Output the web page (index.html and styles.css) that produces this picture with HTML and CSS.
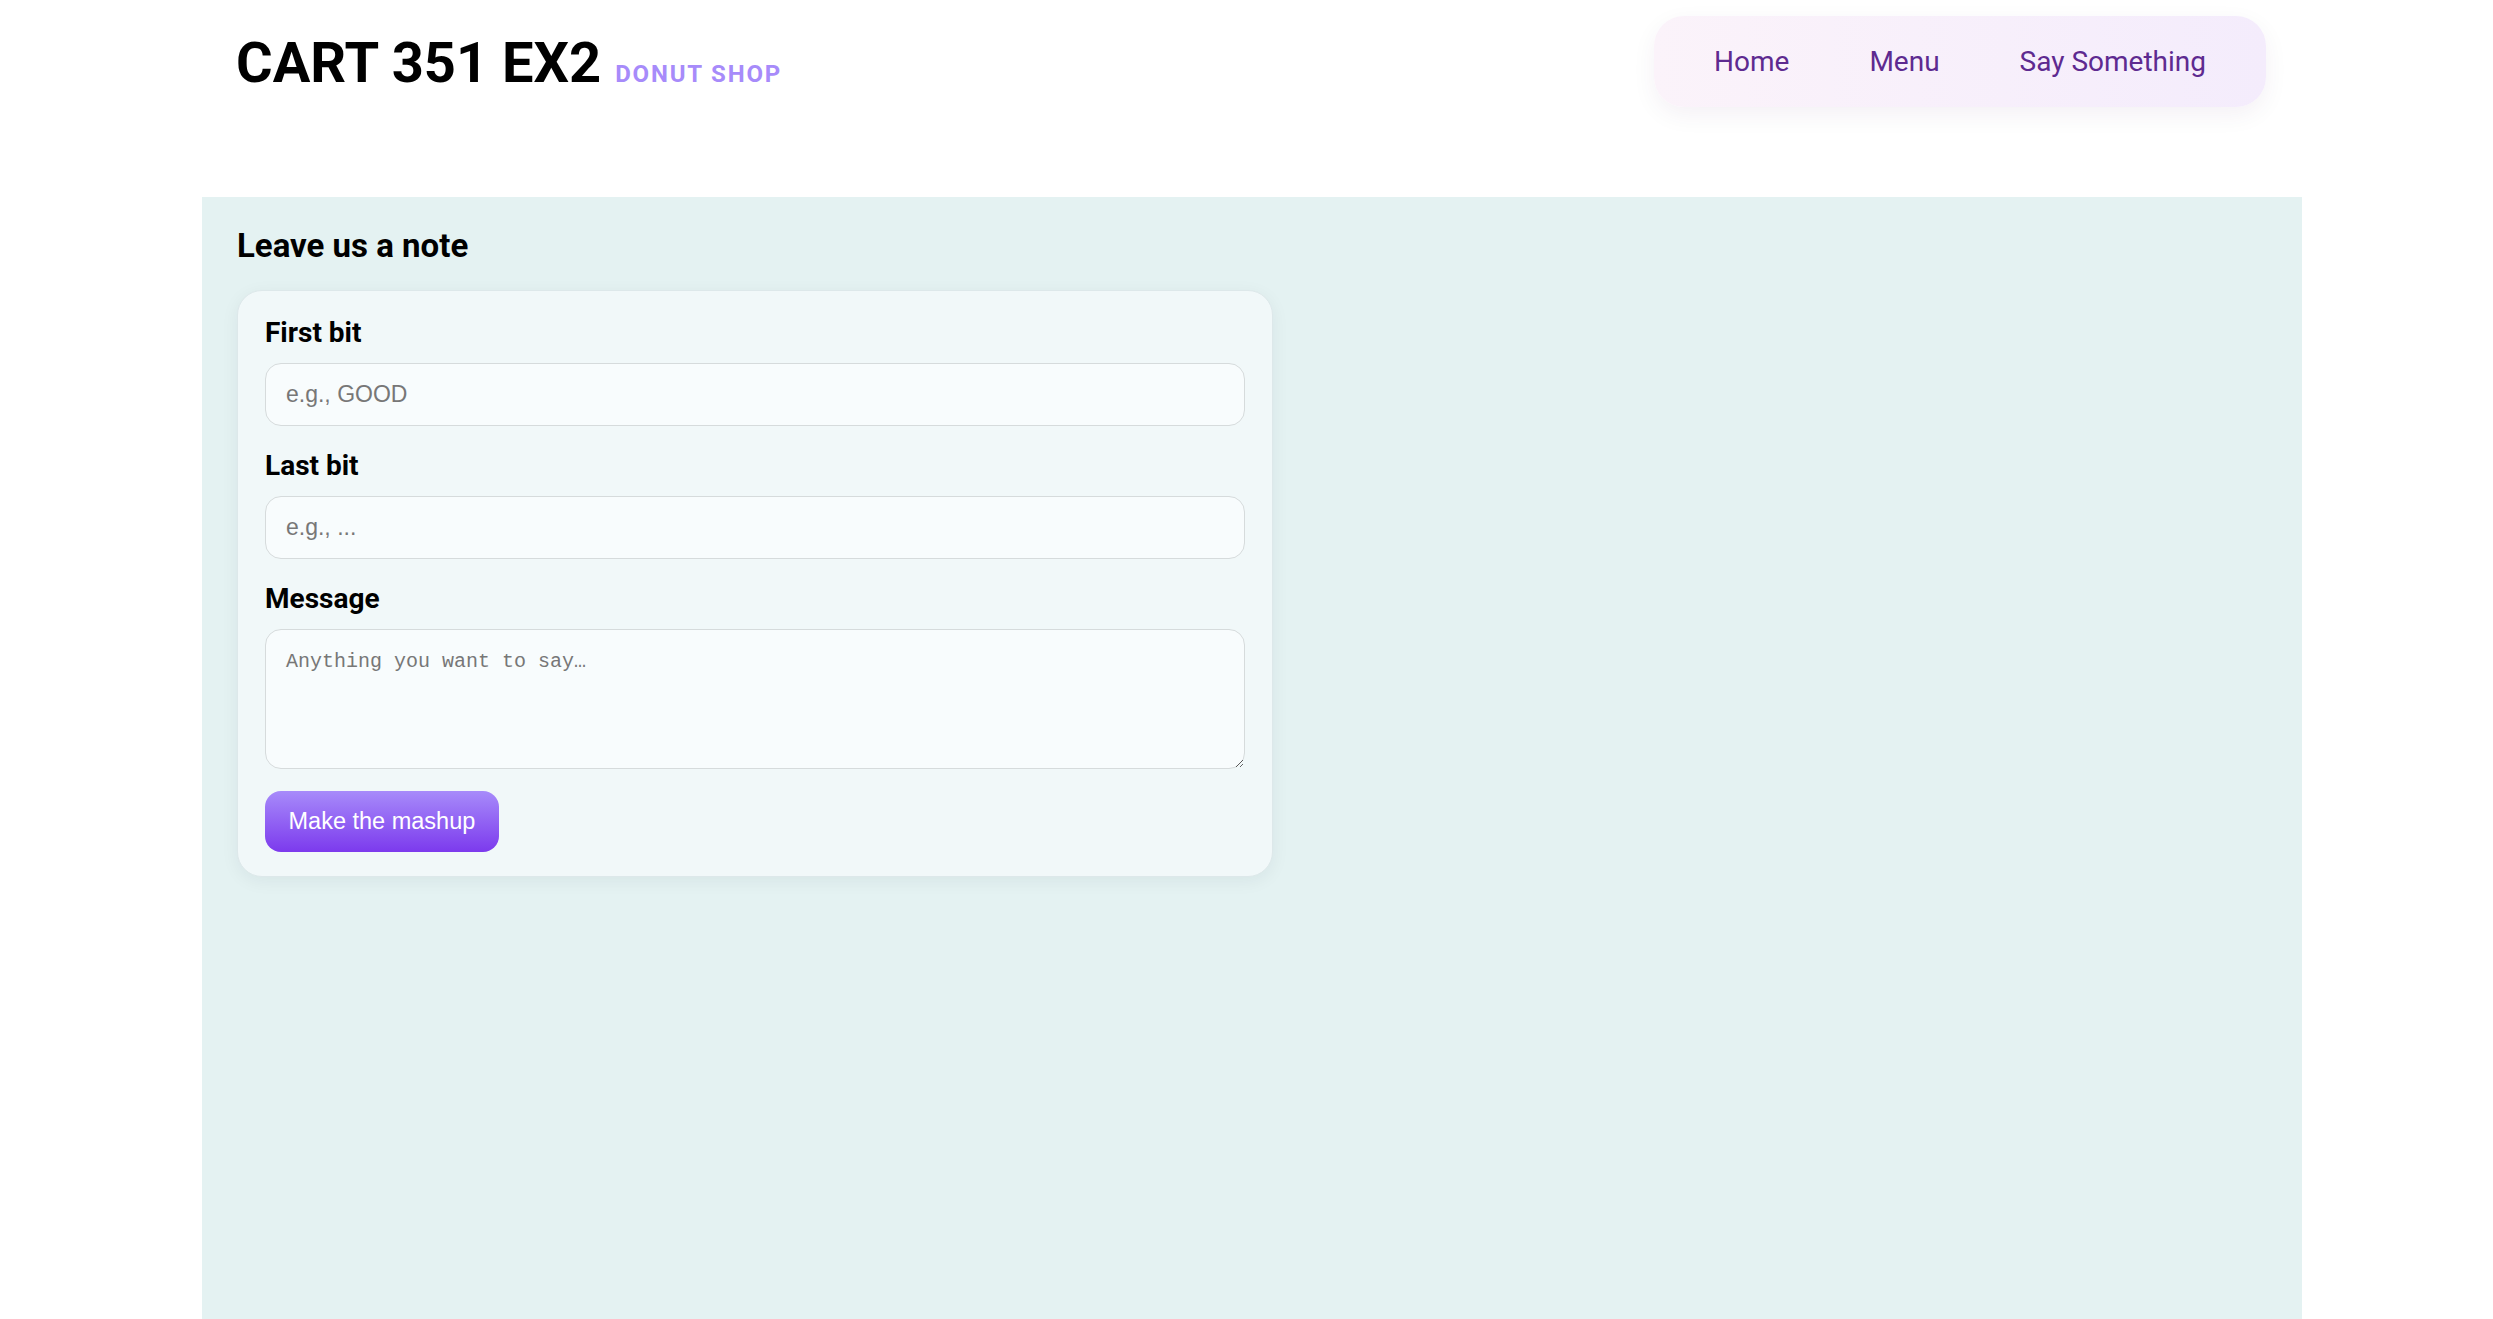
FILE: index.html
```html
<!DOCTYPE html>
<html lang="en">
<head>
<meta charset="utf-8">
<title>CART 351 EX2 — Donut Shop</title>
<link rel="stylesheet" href="styles.css">
</head>
<body>
<div class="wrap">
  <header class="site-header">
    <div class="brand">
      <h1 class="brand-title">CART 351 EX2</h1>
      <span class="brand-sub">DONUT SHOP</span>
    </div>
    <nav class="nav">
      <a class="nav-link" href="#">Home</a>
      <a class="nav-link" href="#">Menu</a>
      <a class="nav-link" href="#">Say Something</a>
    </nav>
  </header>
  <main class="main">
    <h2 class="section-title">Leave us a note</h2>
    <form class="card">
      <div class="field">
        <label class="field-label" for="first">First bit</label>
        <input class="field-input" id="first" type="text" placeholder="e.g., GOOD">
      </div>
      <div class="field">
        <label class="field-label" for="last">Last bit</label>
        <input class="field-input" id="last" type="text" placeholder="e.g., ...">
      </div>
      <div class="field">
        <label class="field-label" for="msg">Message</label>
        <textarea class="field-textarea" id="msg" placeholder="Anything you want to say…"></textarea>
      </div>
      <div class="actions">
        <button class="btn" type="button">Make the mashup</button>
      </div>
    </form>
  </main>
</div>
</body>
</html>
```
FILE: styles.css
```css
* { box-sizing: border-box; }

html, body {
  margin: 0;
  padding: 0;
  background: #ffffff;
}

body {
  font-family: Roboto, "Liberation Sans", Arial, sans-serif;
  color: #000;
}

.wrap {
  margin: 0 191px 0 202px;
}

.site-header {
  display: flex;
  justify-content: space-between;
  align-items: center;
  padding: 16px 36px 0 34px;
}

.brand {
  display: flex;
  align-items: baseline;
  padding-top: 3px;
}

.brand-title {
  margin: 0;
  font-family: Roboto, sans-serif;
  font-weight: 700;
  font-size: 56px;
  line-height: normal;
  color: #000;
}

.brand-sub {
  margin-left: 14px;
  font-family: Roboto, sans-serif;
  font-weight: 700;
  font-size: 24px;
  letter-spacing: 1.8px;
  color: #a78bfa;
}

.nav {
  display: flex;
  align-items: center;
  padding: 13px 20px;
  border-radius: 30px;
  background: linear-gradient(90deg, #fbf3fa 0%, #f4ecfc 100%);
  box-shadow: 0 8px 24px rgba(60, 20, 90, 0.06);
}

.nav-link {
  display: block;
  padding: 16px 40px;
  font-family: Roboto, sans-serif;
  font-size: 28px;
  line-height: normal;
  color: #5e2a90;
  text-decoration: none;
}

.main {
  margin-top: 90px;
  min-height: 1124px;
  padding: 29px 35px 40px;
  background: #e4f2f2;
}

.section-title {
  margin: 0 0 25px;
  font-family: Roboto, sans-serif;
  font-weight: 700;
  font-size: 33px;
  line-height: normal;
}

.card {
  display: flex;
  flex-direction: column;
  gap: 23px;
  width: 1036px;
  padding: 25px 27px 24px;
  background: #f1f8f9;
  border: 1px solid #dde8ea;
  border-radius: 25px;
  box-shadow: 0 4px 18px rgba(0, 40, 50, 0.06);
}

.field {
  display: flex;
  flex-direction: column;
}

.field-label {
  margin-bottom: 14px;
  font-family: Roboto, sans-serif;
  font-weight: 700;
  font-size: 28px;
  line-height: normal;
}

.field-input {
  height: 63px;
  padding: 0 20px;
  font-family: "Liberation Sans", Arial, sans-serif;
  font-size: 23px;
  color: #222;
  background: #f8fcfd;
  border: 1px solid #d6dbdc;
  border-radius: 16px;
  outline: none;
}

.field-textarea {
  display: block;
  height: 140px;
  padding: 20px 20px 12px;
  font-family: "Liberation Mono", monospace;
  font-size: 20px;
  color: #222;
  background: #f8fcfd;
  border: 1px solid #d6dbdc;
  border-radius: 16px;
  outline: none;
  resize: vertical;
}

.field-input::placeholder,
.field-textarea::placeholder {
  color: #777;
}

.actions {
  display: flex;
  margin-top: -1px;
}

.btn {
  padding: 17px 23.5px;
  font-family: "Liberation Sans", Arial, sans-serif;
  font-size: 23.5px;
  line-height: normal;
  color: #fff;
  background: linear-gradient(180deg, #a78bfa 0%, #7c3aed 100%);
  border: none;
  border-radius: 16px;
  cursor: pointer;
}
```
